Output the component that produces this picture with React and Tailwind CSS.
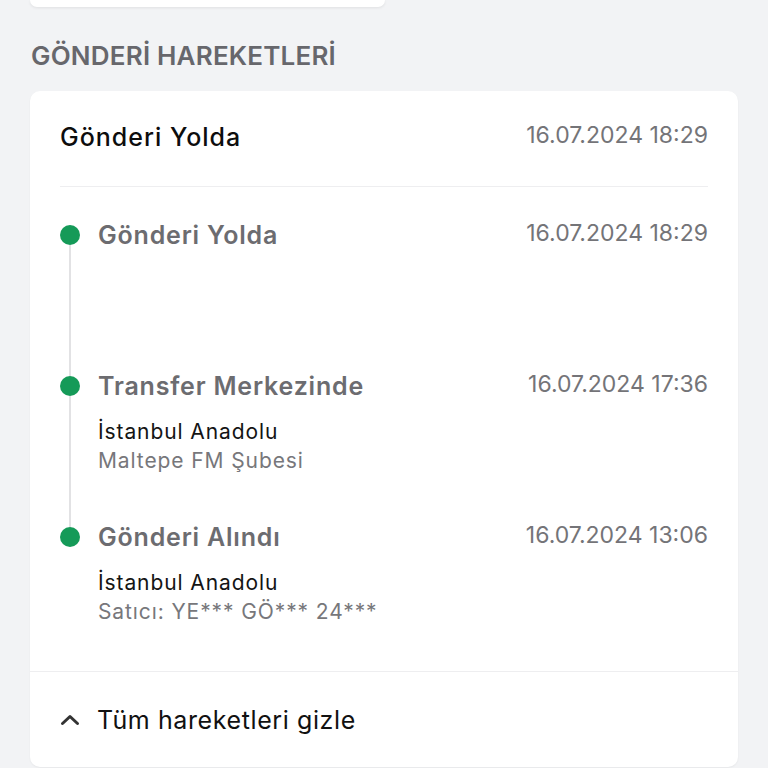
import React from "react";

const items = [
  { title: "Gönderi Yolda", date: "16.07.2024 18:29", lines: [] },
  { title: "Transfer Merkezinde", date: "16.07.2024 17:36", lines: ["İstanbul Anadolu", "Maltepe FM Şubesi"] },
  { title: "Gönderi Alındı", date: "16.07.2024 13:06", lines: ["İstanbul Anadolu", "Satıcı: YE*** GÖ*** 24***"] },
];

function Item({ item, first, last }) {
  return (
    <div className={last ? "flex pb-[45px]" : "flex h-[151px]"}>
      <div className="flex w-[20px] flex-col items-center">
        <div className={first ? "h-[6px] w-[2px]" : "h-[6px] w-[2px] bg-[#e2e2e4]"} />
        <div className="h-[20px] w-[20px] rounded-full bg-[#159a58]" />
        {!last && <div className="w-[2px] flex-1 bg-[#e2e2e4]" />}
      </div>
      <div className="ml-[18px] flex-1">
        <div className="flex items-start justify-between">
          <div className="text-[25px] font-semibold leading-[32px] tracking-[0.8px] text-[#6c6c70]">{item.title}</div>
          <div className="text-[23px] leading-[28px] text-[#747478]">{item.date}</div>
        </div>
        {item.lines.length > 0 && (
          <div className="mt-[15px] text-[21px] leading-[29px] tracking-[0.9px]">
            <div className="text-[#141414]">{item.lines[0]}</div>
            <div className="text-[#77777b]">{item.lines[1]}</div>
          </div>
        )}
      </div>
    </div>
  );
}

export default function App() {
  return (
    <div className="min-h-[768px] w-full overflow-hidden bg-[#f2f3f5] px-[30px] pb-4" style={{ fontFamily: "Inter, 'Noto Sans', sans-serif" }}>
      <div className="h-[7px] w-[355px] rounded-b-[10px] bg-white shadow-[0_1px_3px_rgba(0,0,0,0.08)]" />
      <h2 className="mt-[33px] mb-[19px] pl-[1px] text-[26px] font-semibold leading-[32px] tracking-[0.2px] text-[#67676c]">
        GÖNDERİ HAREKETLERİ
      </h2>
      <div className="rounded-[10px] bg-white shadow-[0_1px_2px_rgba(0,0,0,0.05)]">
        <div className="px-[30px]">
          <div className="flex items-start justify-between pt-[30px] pb-[33px]">
            <div className="text-[25px] font-medium leading-[32px] tracking-[1px] text-[#0d0d0d]">Gönderi Yolda</div>
            <div className="text-[23px] leading-[28px] text-[#747478]">16.07.2024 18:29</div>
          </div>
          <div className="h-px bg-[#eeeef0]" />
          <div className="pt-[32px]">
            {items.map((it, i) => (
              <Item key={i} item={it} first={i === 0} last={i === items.length - 1} />
            ))}
          </div>
        </div>
        <div className="h-px bg-[#eeeef0]" />
        <div className="flex items-center px-[30px] pt-[32px] pb-[31px]">
          <div className="flex w-[20px] justify-center">
            <svg width="20" height="12" viewBox="0 0 20 12" fill="none">
              <path d="M2.5 9.5 L10 2.5 L17.5 9.5" stroke="#333" strokeWidth="3" strokeLinecap="round" strokeLinejoin="round" />
            </svg>
          </div>
          <div className="ml-[17px] text-[25px] leading-[32px] tracking-[0.6px] text-[#111]">Tüm hareketleri gizle</div>
        </div>
      </div>
    </div>
  );
}
